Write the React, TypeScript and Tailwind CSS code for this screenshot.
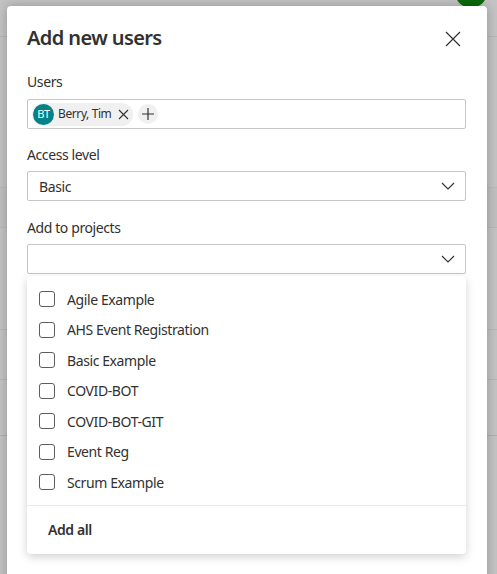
import React from "react";

const projects = [
  "Agile Example",
  "AHS Event Registration",
  "Basic Example",
  "COVID-BOT",
  "COVID-BOT-GIT",
  "Event Reg",
  "Scrum Example",
];

function Chevron() {
  return (
    <svg width="14" height="8" viewBox="0 0 14 8" fill="none" className="text-[#323130]">
      <path d="M1 1l6 6 6-6" stroke="currentColor" strokeWidth="1.1" />
    </svg>
  );
}

export default function App() {
  return (
    <div
      className="relative w-[497px] h-[574px] overflow-hidden bg-[#c4c4c4] text-[#323130] tracking-[-0.4px]"
      style={{ fontFamily: '"Segoe UI", "Noto Sans", "Open Sans", sans-serif' }}
    >
      {/* dimmed page behind the dialog */}
      <div className="flex flex-col">
        <div className="h-[37px] border-b border-[#b8b8b8]" />
        <div className="h-[151px] border-b border-[#bababa]" />
        <div className="h-[40px] bg-[#c0c0c0] border-b border-[#b8b8b8]" />
        <div className="h-[102px] border-b border-[#b8b8b8]" />
        <div className="h-[50px] border-b border-[#b8b8b8]" />
        <div className="h-[56px] border-b border-[#b0b0b0]" />
      </div>
      <div className="absolute right-[10px] -top-[24px] w-[32px] h-[32px] rounded-full bg-[#0b6a0b]" />

      {/* dialog */}
      <div className="absolute left-[7px] top-[6px] w-[480px] h-[600px] bg-white rounded-[4px] shadow-[0_0_12px_rgba(0,0,0,0.25)] pl-[20px] pr-[21px] pt-[18px]">
        <div className="flex items-center justify-between h-[28px]">
          <h1 className="text-[20px] font-semibold leading-[28px] tracking-[-0.6px]">Add new users</h1>
          <svg width="16" height="16" viewBox="0 0 16 16" className="mr-[5px] mt-[2px]">
            <path d="M1 1l14 14M15 1L1 15" stroke="#323130" strokeWidth="1.2" />
          </svg>
        </div>

        <div className="mt-[20px] text-[14px] leading-[20px]">Users</div>
        <div className="mt-[7px] h-[30px] border border-[#c8c6c4] rounded-[2px] flex items-center pl-[4px] gap-[5px]">
          <div className="flex items-center h-[23px] rounded-full bg-[#f0f0f0] pr-[4px]">
            <div className="w-[21px] h-[21px] rounded-full bg-[#038387] text-white text-[11px] tracking-[-0.5px] flex items-center justify-center ml-[1px]">
              BT
            </div>
            <span className="ml-[4px] text-[12px] tracking-[-0.4px]">Berry, Tim</span>
            <svg width="11" height="11" viewBox="0 0 11 11" className="ml-[7px]">
              <path d="M1 1l9 9M10 1L1 10" stroke="#323130" strokeWidth="1.1" />
            </svg>
          </div>
          <div className="w-[20px] h-[20px] rounded-full bg-[#f0f0f0] flex items-center justify-center">
            <svg width="12" height="12" viewBox="0 0 12 12">
              <path d="M6 0v12M0 6h12" stroke="#323130" strokeWidth="1.2" />
            </svg>
          </div>
        </div>

        <div className="mt-[16px] text-[14px] leading-[20px]">Access level</div>
        <div className="mt-[6px] h-[30px] border border-[#c8c6c4] rounded-[2px] flex items-center justify-between pl-[11px] pr-[10px]">
          <span className="text-[14px]">Basic</span>
          <Chevron />
        </div>

        <div className="mt-[17px] text-[14px] leading-[20px]">Add to projects</div>
        <div className="mt-[6px] h-[30px] border border-[#c8c6c4] rounded-[2px] flex items-center justify-end pr-[10px]">
          <Chevron />
        </div>

        <div className="relative mt-[2px] bg-white rounded-[4px] shadow-[0_3px_10px_rgba(0,0,0,0.18)]">
          <div className="pt-[8px] pb-[7px]">
            {projects.map((p) => (
              <div key={p} className="h-[30.5px] flex items-center pl-[12px] gap-[12px]">
                <div className="w-[16px] h-[16px] border border-[#605e5c] rounded-[3px]" />
                <span className="text-[14px]">{p}</span>
              </div>
            ))}
          </div>
          <div className="border-t border-[#edebe9] h-[49px] flex items-center pl-[21px]">
            <span className="text-[14px] font-semibold">Add all</span>
          </div>
        </div>
      </div>
    </div>
  );
}
